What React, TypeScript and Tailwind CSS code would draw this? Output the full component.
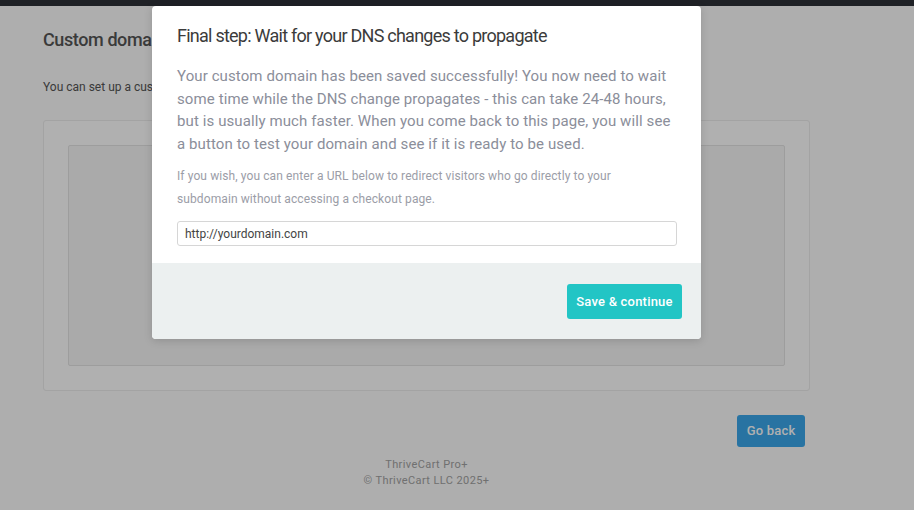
import React from 'react';

const font = { fontFamily: 'Roboto, "Noto Sans", sans-serif' };

const App: React.FC = () => {
  return (
    <div className="relative w-[914px] h-[510px] overflow-hidden bg-[#fcfcfc]" style={font}>
      {/* page behind the modal */}
      <div className="h-[6px] bg-[#2d3137]" />
      <div className="px-[43px] w-[853px]">
        <h1 className="mt-[22px] text-[18px] leading-[24px] font-medium tracking-[-0.4px] text-[#555]">
          Custom domain
        </h1>
        <p className="mt-[27px] text-[12px] leading-[16px] text-[#555]">
          You can set up a custom domain for your checkout pages.
        </p>
        <div className="mt-[25px] h-[271px] bg-white border border-[#ececec] rounded-[3px] px-[24px] pt-[24px]">
          <div className="h-[221px] bg-[#f6f6f6] border border-[#e4e4e4] rounded-[2px]" />
        </div>
        <div className="flex justify-end mt-[24px] pr-[5px]">
          <button className="h-[32px] w-[68px] rounded-[3px] bg-[#3aa7eb] text-white text-[13px] font-medium tracking-[0.2px]">
            Go back
          </button>
        </div>
        <div className="mt-[10px] text-center text-[11px] leading-[16px] tracking-[0.4px] text-[#a3a3a3]">
          <div>ThriveCart Pro+</div>
          <div>© ThriveCart LLC 2025+</div>
        </div>
      </div>

      {/* overlay */}
      <div className="absolute inset-0 bg-black/[0.31]" />

      {/* modal */}
      <div className="absolute top-[6px] left-[152px] w-[549px] bg-white rounded-[4px] overflow-hidden shadow-[0_2px_8px_rgba(0,0,0,0.15)]">
        <div className="px-[25px] pt-[19px] pb-[17px]">
          <h2 className="text-[18px] leading-[22px] font-normal tracking-[-0.75px] text-[#3b3b3b]">
            Final step: Wait for your DNS changes to propagate
          </h2>
          <p className="mt-[18px] text-[15px] leading-[22.5px] tracking-[0.1px] text-[#8b8e9a]">
            Your custom domain has been saved successfully! You now need to wait some time while the DNS change
            propagates - this can take 24-48 hours, but is usually much faster. When you come back to this page, you
            will see a button to test your domain and see if it is ready to be used.
          </p>
          <p className="mt-[10px] text-[12px] leading-[23px] tracking-[0.1px] text-[#9b9da7]">
            If you wish, you can enter a URL below to redirect visitors who go directly to your
            <br />
            subdomain without accessing a checkout page.
          </p>
          <input
            className="mt-[10px] block w-[500px] h-[25px] px-[7px] border border-[#d6d6d6] rounded-[3px] text-[12px] text-[#444] outline-none"
            defaultValue="http://yourdomain.com"
          />
        </div>
        <div className="bg-[#ecf0f0] h-[76px] flex justify-end items-start pt-[21px] pr-[19px]">
          <button className="h-[35px] w-[115px] rounded-[3px] bg-[#22c5c5] text-white text-[13px] font-medium tracking-[0.2px]">
            Save &amp; continue
          </button>
        </div>
      </div>
    </div>
  );
};

export default App;
